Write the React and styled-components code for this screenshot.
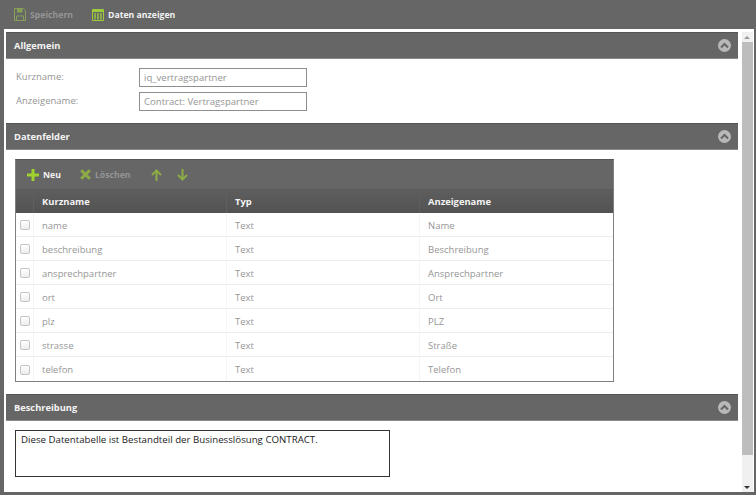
import styled, { createGlobalStyle } from 'styled-components'

const GlobalStyle = createGlobalStyle`
  html, body { margin: 0; padding: 0; background: #666; }
  body { font-family: "Open Sans", "Liberation Sans", sans-serif; font-size: 10px; overflow: hidden; }
`

const Page = styled.div`
  width: 756px;
  height: 495px;
  display: flex;
  flex-direction: column;
  background: #666;
  overflow: hidden;
`
const TopBar = styled.div`
  height: 29px;
  flex: none;
  display: flex;
  align-items: center;
  padding-left: 14px;
  gap: 19px;
`
const TopButton = styled.div`
  display: flex;
  align-items: center;
  gap: 4px;
  font-size: 8.7px;
  font-weight: 700;
  color: ${p => (p.$off ? '#959595' : '#f2f2f2')};
`
const Frame = styled.div`
  flex: none;
  height: 463px;
  margin: 0 2px 3px 4px;
  background: #fff;
  display: flex;
  overflow: hidden;
`
const Content = styled.div`
  width: 732px;
  margin-left: 2px;
  padding-top: 3px;
  flex: none;
`
const Scrollbar = styled.div`
  width: 10.5px;
  margin-left: 4px;
  margin-top: 3px;
  height: 460px;
  background: #f0f0f0;
  display: flex;
  flex-direction: column;
  align-items: center;
`
const ScrollArrow = styled.div`
  height: 10px;
  flex: none;
  width: 100%;
  display: flex;
  align-items: center;
  justify-content: center;
  &::after {
    content: '';
    border-left: 3px solid transparent;
    border-right: 3px solid transparent;
    ${p => (p.$down ? 'border-top: 3px solid #333;' : 'border-bottom: 3px solid #999;')}
  }
`
const ScrollThumb = styled.div`
  width: 100%;
  height: 413px;
  background: #bdbdbd;
`
const ScrollRest = styled.div`
  flex: 1;
`
const SectionHead = styled.div`
  height: 27px;
  box-sizing: border-box;
  background: #666;
  border-top: 1px solid #555;
  border-bottom: 1px solid #8a8a8a;
  display: flex;
  align-items: center;
  justify-content: space-between;
  padding: 0 7px 0 8px;
  color: #f4f4f4;
  font-size: 9.3px;
  font-weight: 700;
`
const Collapse = styled.div`
  width: 13px;
  height: 13px;
  border-radius: 50%;
  background: #b8b8b8;
  display: flex;
  align-items: center;
  justify-content: center;
`
const General = styled.div`
  height: 64px;
  box-sizing: border-box;
  padding: 9px 0 0 10px;
  display: flex;
  flex-direction: column;
  gap: 5px;
`
const FieldRow = styled.div`
  display: flex;
  align-items: center;
  height: 19px;
`
const FieldLabel = styled.div`
  width: 123px;
  color: #969696;
  font-size: 9.5px;
  margin-top: -3px;
`
const FieldValue = styled.div`
  width: 168px;
  height: 19px;
  box-sizing: border-box;
  border: 1px solid #8e8e8e;
  padding-left: 4px;
  color: #969696;
  font-size: 9.6px;
  line-height: 17px;
`
const TableArea = styled.div`
  height: 244px;
  padding: 9px 0 0 9px;
  box-sizing: border-box;
`
const Table = styled.div`
  width: 599px;
  height: 223px;
  box-sizing: border-box;
  border: 1px solid #808080;
  border-top-color: #555;
`
const TableTools = styled.div`
  height: 30px;
  background: #666;
  display: flex;
  align-items: center;
  padding-left: 11px;
  border-bottom: 1px solid #5a5a5a;
  box-sizing: border-box;
`
const ToolButton = styled.div`
  display: flex;
  align-items: center;
  gap: 4px;
  margin-right: ${p => p.$gap || 0}px;
  font-size: 8.7px;
  font-weight: 700;
  color: ${p => (p.$off ? '#959595' : '#f2f2f2')};
`
const Grid = styled.div`
  display: grid;
  grid-template-columns: 18px 193px 193px 1fr;
`
const HeadRow = styled(Grid)`
  height: 23px;
  background: linear-gradient(#5e5e5e, #525252);
  color: #f4f4f4;
  font-size: 9.4px;
  font-weight: 700;
`
const HeadCell = styled.div`
  display: flex;
  align-items: center;
  padding-left: ${p => (p.$check ? 0 : 8)}px;
  border-right: 1px solid #5f5f5f;
  &:last-child { border-right: none; }
`
const Row = styled(Grid)`
  height: 24px;
  box-sizing: border-box;
  padding-top: 1px;
  border-bottom: 1px solid #ececec;
  &:last-child { border-bottom: none; }
`
const Cell = styled.div`
  display: flex;
  align-items: center;
  padding-left: ${p => (p.$check ? 4 : 8)}px;
  border-right: 1px solid #f4f4f4;
  color: #969696;
  font-size: 9.5px;
  &:last-child { border-right: none; }
`
const CheckBox = styled.div`
  width: 10px;
  height: 10px;
  box-sizing: border-box;
  border: 1px solid #c4c4c4;
  border-radius: 2px;
  background: linear-gradient(#fff, #ececec);
`
const DescBox = styled.div`
  width: 375px;
  height: 47px;
  box-sizing: border-box;
  border: 1px solid #333;
  margin: 9px 0 0 9px;
  padding: 2px 0 0 5px;
  color: #222;
  font-size: 9.7px;
`

const fields = [
  ['name', 'Name'],
  ['beschreibung', 'Beschreibung'],
  ['ansprechpartner', 'Ansprechpartner'],
  ['ort', 'Ort'],
  ['plz', 'PLZ'],
  ['strasse', 'Straße'],
  ['telefon', 'Telefon'],
]

const SaveIcon = () => (
  <svg width="12" height="13" viewBox="0 0 12 13" opacity="0.55">
    <path d="M.5.5h9l2 2v10H.5z" fill="none" stroke="#a3cf4a" />
    <path d="M3 1h5.5v3.5H3z" fill="#a3cf4a" />
    <path d="M2.5 8h7v4.5h-7z" fill="none" stroke="#a3cf4a" />
  </svg>
)
const TableIcon = () => (
  <svg width="12" height="12" viewBox="0 0 12 12">
    <path d="M.5.5h11v11H.5z" fill="none" stroke="#9ccc3c" />
    <path d="M1 1h10v2H1z" fill="#9ccc3c" />
    <path d="M3 4v6.5M6 4v6.5M9 4v6.5" stroke="#9ccc3c" strokeWidth="1.4" />
  </svg>
)
const PlusIcon = () => (
  <svg width="12" height="12" viewBox="0 0 12 12">
    <path d="M6 0v12M0 6h12" stroke="#a0d22e" strokeWidth="3" />
  </svg>
)
const CrossIcon = () => (
  <svg width="11" height="11" viewBox="0 0 11 11">
    <path d="M1.2 1.2l8.6 8.6M9.8 1.2l-8.6 8.6" stroke="#8dab45" strokeWidth="3" />
  </svg>
)
const ArrowIcon = ({ down }) => (
  <svg width="11" height="12" viewBox="0 0 11 12">
    <path
      d={down ? 'M5.5 0v10M1 6l4.5 4.5L10 6' : 'M5.5 12V2M1 6l4.5-4.5L10 6'}
      fill="none"
      stroke="#8dab45"
      strokeWidth="2"
    />
  </svg>
)
const ChevronIcon = () => (
  <svg width="9" height="7" viewBox="0 0 9 7">
    <path d="M1 5.5l3.5-3.5L8 5.5" fill="none" stroke="#666" strokeWidth="2" />
  </svg>
)

function Section({ title }) {
  return (
    <SectionHead>
      {title}
      <Collapse><ChevronIcon /></Collapse>
    </SectionHead>
  )
}

function App() {
  return (
    <Page>
      <GlobalStyle />
      <TopBar>
        <TopButton $off><SaveIcon />Speichern</TopButton>
        <TopButton><TableIcon />Daten anzeigen</TopButton>
      </TopBar>
      <Frame>
        <Content>
          <Section title="Allgemein" />
          <General>
            <FieldRow>
              <FieldLabel>Kurzname:</FieldLabel>
              <FieldValue>iq_vertragspartner</FieldValue>
            </FieldRow>
            <FieldRow>
              <FieldLabel>Anzeigename:</FieldLabel>
              <FieldValue>Contract: Vertragspartner</FieldValue>
            </FieldRow>
          </General>
          <Section title="Datenfelder" />
          <TableArea>
            <Table>
              <TableTools>
                <ToolButton $gap={19}><PlusIcon />Neu</ToolButton>
                <ToolButton $off $gap={20}><CrossIcon />Löschen</ToolButton>
                <ToolButton $gap={15}><ArrowIcon /></ToolButton>
                <ToolButton><ArrowIcon down /></ToolButton>
              </TableTools>
              <HeadRow>
                <HeadCell $check />
                <HeadCell>Kurzname</HeadCell>
                <HeadCell>Typ</HeadCell>
                <HeadCell>Anzeigename</HeadCell>
              </HeadRow>
              {fields.map(f => (
                <Row key={f[0]}>
                  <Cell $check><CheckBox /></Cell>
                  <Cell>{f[0]}</Cell>
                  <Cell>Text</Cell>
                  <Cell>{f[1]}</Cell>
                </Row>
              ))}
            </Table>
          </TableArea>
          <Section title="Beschreibung" />
          <DescBox>Diese Datentabelle ist Bestandteil der Businesslösung CONTRACT.</DescBox>
        </Content>
        <Scrollbar>
          <ScrollArrow />
          <ScrollThumb />
          <ScrollRest />
          <ScrollArrow $down />
        </Scrollbar>
      </Frame>
    </Page>
  )
}

export default App
